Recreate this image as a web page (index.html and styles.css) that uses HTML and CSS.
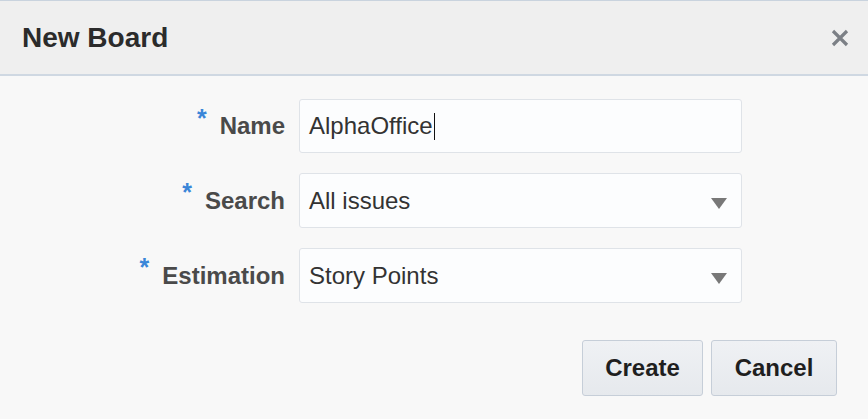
FILE: index.html
```html
<!DOCTYPE html>
<html lang="en">
<head>
<meta charset="utf-8">
<title>New Board</title>
<link rel="stylesheet" href="styles.css">
</head>
<body>
<div class="dialog">
  <div class="header">
    <h1 class="title">New Board</h1>
    <button class="close" aria-label="Close">
      <svg width="18" height="18" viewBox="0 0 18 18"><path d="M2 2L16 16M16 2L2 16" stroke="#7c8086" stroke-width="3.2" stroke-linecap="butt"/></svg>
    </button>
  </div>
  <div class="body">
    <div class="form">
      <label class="label"><span class="req">*</span>Name</label>
      <div class="field"><span class="value">AlphaOffice</span><span class="caret"></span></div>

      <label class="label"><span class="req">*</span>Search</label>
      <div class="field select"><span class="value">All issues</span>
        <svg class="arrow" width="16" height="11" viewBox="0 0 16 11"><polygon points="0,0 16,0 8,11" fill="#787878"/></svg>
      </div>

      <label class="label"><span class="req">*</span>Estimation</label>
      <div class="field select"><span class="value">Story Points</span>
        <svg class="arrow" width="16" height="11" viewBox="0 0 16 11"><polygon points="0,0 16,0 8,11" fill="#787878"/></svg>
      </div>
    </div>
    <div class="actions">
      <button class="btn create">Create</button>
      <button class="btn cancel">Cancel</button>
    </div>
  </div>
</div>
</body>
</html>
```
FILE: styles.css
```css
* { box-sizing: border-box; }
html, body {
  margin: 0;
  padding: 0;
  width: 868px;
  height: 419px;
  overflow: hidden;
  background: #f8f8f8;
  font-family: "Liberation Sans", Arial, sans-serif;
}
.dialog {
  width: 868px;
  height: 419px;
  background: #f8f8f8;
}
.header {
  height: 76px;
  background: #efefef;
  border-top: 1px solid #c9d3de;
  border-bottom: 2px solid #cfd8e2;
  display: flex;
  align-items: center;
  justify-content: space-between;
  padding: 0 19px 0 22px;
}
.title {
  margin: 0;
  font-size: 28px;
  font-weight: bold;
  color: #2b2b2b;
}
.close {
  border: 0;
  background: transparent;
  padding: 0;
  width: 18px;
  height: 18px;
  display: flex;
}
.body {
  padding-top: 23px;
}
.form {
  display: grid;
  grid-template-columns: 285px 443px;
  column-gap: 14px;
  row-gap: 20px;
}
.label {
  display: flex;
  justify-content: flex-end;
  align-items: center;
  font-size: 24px;
  font-weight: bold;
  color: #4a4a4a;
  white-space: nowrap;
}
.req {
  color: #3a86d8;
  font-weight: bold;
  font-size: 25px;
  margin-right: 13px;
  align-self: flex-start;
  margin-top: 7px;
  line-height: 1;
}
.field {
  height: 54px;
  background: #fcfdfe;
  border: 1px solid #dfe3e8;
  border-radius: 3px;
  display: flex;
  align-items: center;
  padding: 0 14px 0 9px;
  font-size: 24px;
  color: #333333;
}
.field.select {
  height: 55px;
  justify-content: space-between;
}
.caret {
  display: inline-block;
  width: 1px;
  height: 27px;
  background: #111;
  margin-left: 1px;
}
.arrow {
  margin-top: 6px;
}
.actions {
  display: flex;
  justify-content: flex-end;
  gap: 8px;
  padding-right: 31px;
  margin-top: 37px;
}
.btn {
  height: 56px;
  border: 1px solid #c6ced8;
  border-radius: 3px;
  background: linear-gradient(#eff1f4, #e6e9ed);
  font-family: "Liberation Sans", Arial, sans-serif;
  font-size: 24px;
  font-weight: bold;
  color: #1f1f1f;
  padding: 0;
}
.create { width: 121px; }
.cancel { width: 126px; }
```
